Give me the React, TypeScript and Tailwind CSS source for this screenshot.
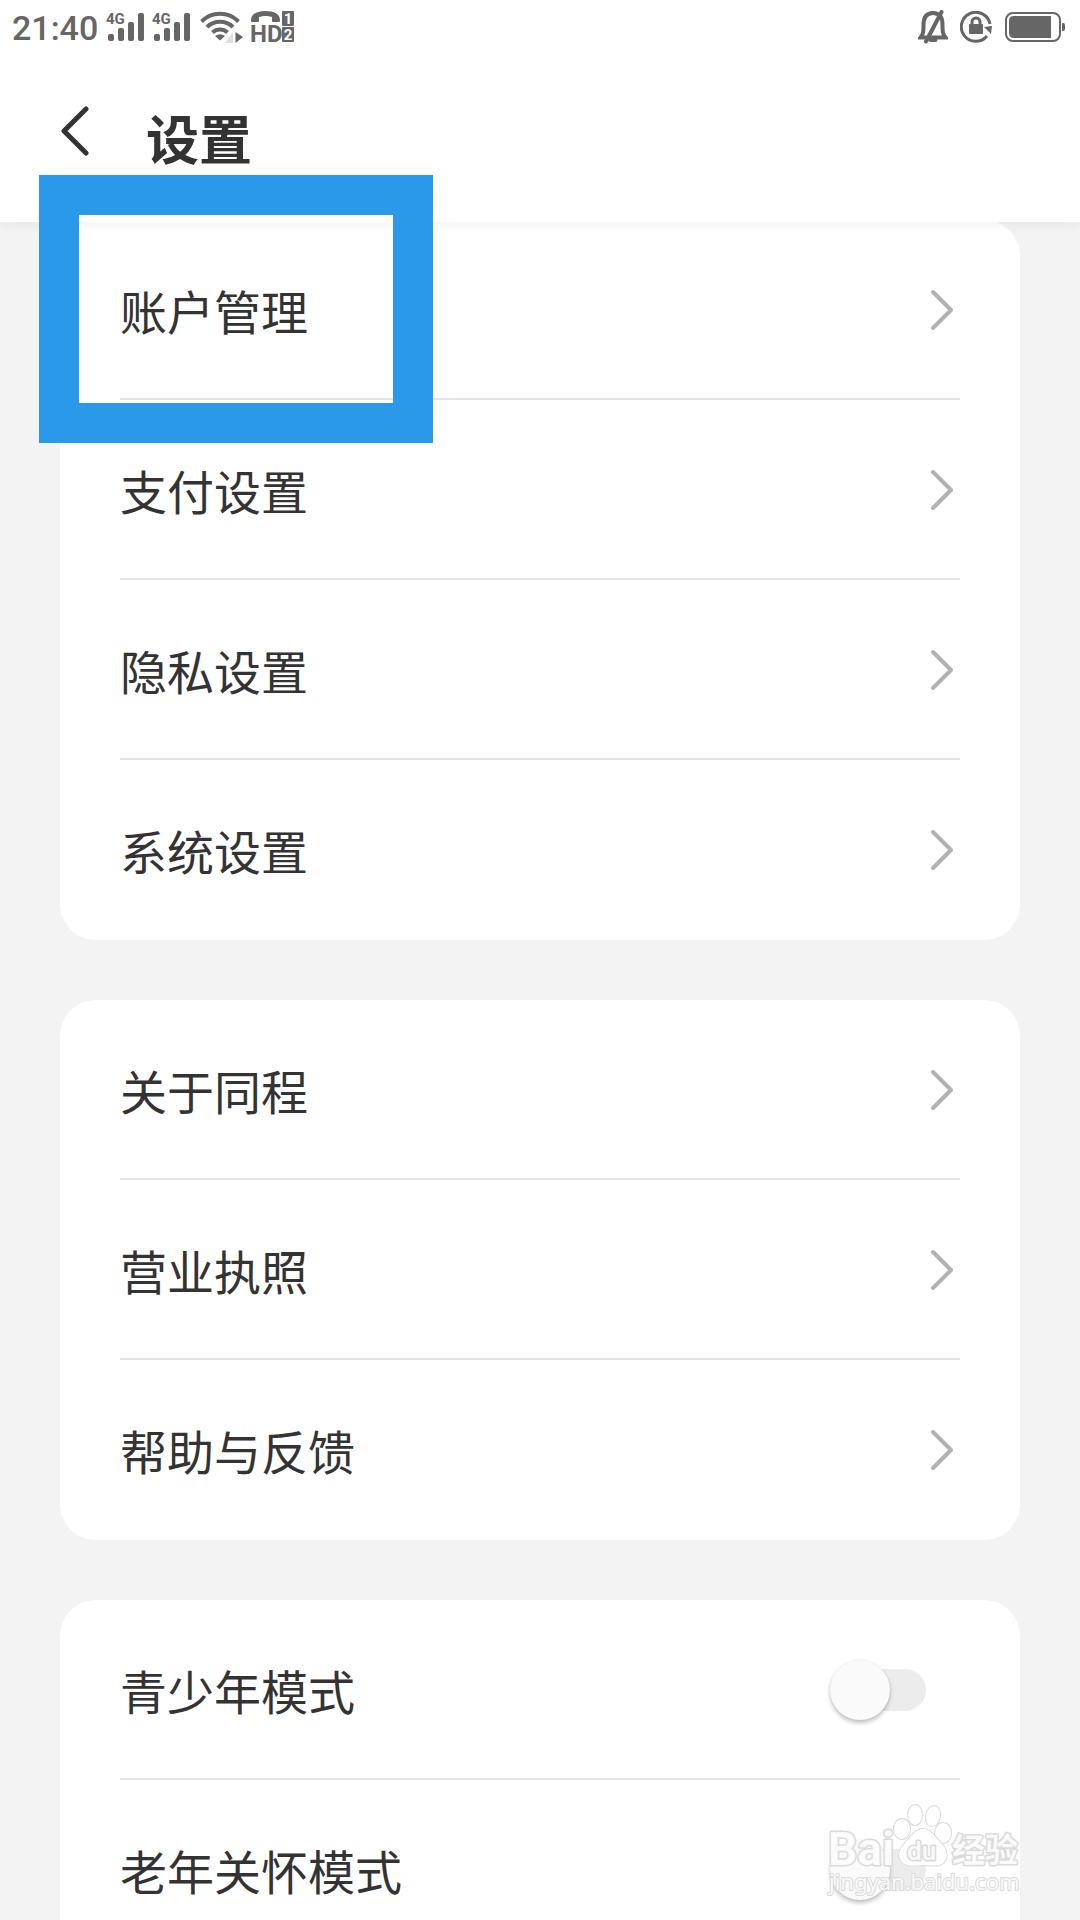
import React from "react";

type Row = { label: string; kind: "link" | "switch" };

const groups: Row[][] = [
  [
    { label: "账户管理", kind: "link" },
    { label: "支付设置", kind: "link" },
    { label: "隐私设置", kind: "link" },
    { label: "系统设置", kind: "link" },
  ],
  [
    { label: "关于同程", kind: "link" },
    { label: "营业执照", kind: "link" },
    { label: "帮助与反馈", kind: "link" },
  ],
  [
    { label: "青少年模式", kind: "switch" },
    { label: "老年关怀模式", kind: "switch" },
  ],
];

function Signal() {
  return (
    <svg width="40" height="32" viewBox="0 0 40 32" fill="#666" aria-hidden="true">
      <text x="0" y="13" fontFamily="Roboto, sans-serif" fontSize="15" fontWeight="700">
        4G
      </text>
      <rect x="2" y="23" width="6" height="7" rx="2" />
      <rect x="12" y="17" width="6" height="13" rx="2" />
      <rect x="22" y="11" width="6" height="19" rx="2" />
      <rect x="32" y="2" width="6" height="28" rx="2" />
    </svg>
  );
}

function Wifi() {
  return (
    <svg width="44" height="32" viewBox="0 0 44 32" aria-hidden="true">
      <g fill="none" stroke="#666" strokeWidth="4">
        <path d="M1.5 10.500 A26 26 0 0 1 38.5 10.500" />
        <path d="M7 16 A18.500 18.500 0 0 1 33 16" />
        <path d="M12.500 21.500 A11 11 0 0 1 27.500 21.500" />
      </g>
      <path d="M15 25 Q20 21.500 25 25 L20 29.500 Z" fill="#666" />
      <path d="M33 21 V32 H25 Z" fill="#ddd" />
      <path d="M35.500 21 L43 26 L35.500 32 Z" fill="#666" />
    </svg>
  );
}

function HdCall() {
  return (
    <svg className="overflow-visible" width="46" height="32" viewBox="0 0 46 32" fill="#666" aria-hidden="true">
      <path d="M1 9 C1 3 7 0 15.500 0 S30 3 30 9 V10 Q30 11 29 11 H23 Q22 11 22 10 V6 Q15.500 4 9 6 V10 Q9 11 8 11 H2 Q1 11 1 10 Z" />
      <text x="0" y="31" fontFamily="Roboto, sans-serif" fontSize="24" fontWeight="700">
        HD
      </text>
      <rect x="32" y="0" width="12" height="15" rx="1" />
      <rect x="32" y="16" width="12" height="15" rx="1" />
      <g fill="#fff" fontFamily="Roboto, sans-serif" fontSize="15" fontWeight="700" textAnchor="middle">
        <text x="38" y="13">1</text>
        <text x="38" y="29">2</text>
      </g>
    </svg>
  );
}

function BellOff() {
  return (
    <svg width="30" height="34" viewBox="0 0 30 34" fill="none" stroke="#666" aria-hidden="true">
      <path
        d="M2.500 27.500 H27.500 C24.500 24 24.500 21 24.500 15 C24.500 7 21 3 15 3 S5.500 7 5.500 15 C5.500 21 5.500 24 2.500 27.500 Z"
        strokeWidth="4"
      />
      <path d="M8 31.500 L23.500 2" strokeWidth="4" strokeLinecap="round" />
      <path d="M12.500 30 H17.500" strokeWidth="4" strokeLinecap="round" />
    </svg>
  );
}

function RotationLock() {
  return (
    <svg width="32" height="32" viewBox="0 0 32 32" aria-hidden="true">
      <path d="M27 25 A14.500 14.500 0 1 1 30 13" fill="none" stroke="#666" strokeWidth="3" />
      <path d="M24 16 L32 15 L31 23 Z" fill="#666" />
      <rect x="9" y="13" width="14" height="10" rx="1" fill="#666" />
      <path d="M12 14 V11 A4 4 0 0 1 20 11 V14" fill="none" stroke="#666" strokeWidth="3" />
    </svg>
  );
}

function Battery() {
  return (
    <svg width="60" height="30" viewBox="0 0 60 30" aria-hidden="true">
      <rect x="1" y="1" width="54" height="28" rx="7" fill="none" stroke="#666" strokeWidth="2" />
      <path d="M46 4 V26 H9 Q4 26 4 21 V9 Q4 4 9 4 Z" fill="#666" />
      <path d="M57 11 H58 Q60 11 60 13 V17 Q60 19 58 19 H57 Z" fill="#666" />
    </svg>
  );
}

function StatusBar() {
  return (
    <div className="flex h-[54px] items-center justify-between pl-3 pr-[15px] text-[#666]">
      <div className="flex items-center">
        <span className="w-[94px] pt-0.5 font-[Roboto,sans-serif] text-[34px] leading-[52px] font-medium">21:40</span>
        <Signal />
        <span className="w-1.5" />
        <Signal />
        <span className="w-2" />
        <Wifi />
        <span className="w-1.5" />
        <HdCall />
      </div>
      <div className="flex items-center">
        <BellOff />
        <span className="w-3" />
        <RotationLock />
        <span className="w-[13px]" />
        <Battery />
      </div>
    </div>
  );
}

function Chevron() {
  return (
    <svg
      className="mr-1.5"
      width="24"
      height="44"
      viewBox="0 0 24 44"
      fill="none"
      stroke="#b2b2b2"
      strokeWidth="4"
      strokeLinecap="round"
      strokeLinejoin="round"
      aria-hidden="true"
    >
      <path d="M3 4 L21 22 L3 40" />
    </svg>
  );
}

function SettingRow({ row }: { row: Row }) {
  const box = "flex h-[180px] w-full items-center justify-between text-left text-[47px] leading-[68px] text-[#333]";
  if (row.kind === "link") {
    return (
      <button type="button" className={box}>
        <span className="pt-2">{row.label}</span>
        <Chevron />
      </button>
    );
  }
  return (
    <label className={box}>
      <span className="pt-2">{row.label}</span>
      <input
        type="checkbox"
        role="switch"
        className="relative mr-[34px] h-[60px] w-24 appearance-none before:absolute before:top-[9px] before:right-0 before:h-[42px] before:w-[84px] before:rounded-full before:bg-[#ececec] after:absolute after:top-0 after:left-0 after:size-[60px] after:rounded-full after:bg-[#fafafa] after:shadow-[0_3px_4px_rgba(0,0,0,0.24),0_0_2px_rgba(0,0,0,0.08)]"
      />
    </label>
  );
}

function Watermark() {
  return (
    <svg
      className="pointer-events-none absolute right-[54px] bottom-3 z-20"
      width="202"
      height="110"
      viewBox="824 1798 202 110"
      fill="#fff"
      fillOpacity="0.85"
      stroke="#dadada"
      strokeWidth="3"
      strokeLinejoin="round"
      paintOrder="stroke"
      aria-label="Baidu 经验"
    >
      <text x="828" y="1865" fontFamily="Roboto, sans-serif" fontSize="46" fontWeight="700">
        Bai
      </text>
      <g strokeWidth="2" fillOpacity="1">
        <ellipse cx="902" cy="1829" rx="8" ry="10" />
        <ellipse cx="915" cy="1815" rx="7" ry="10" />
        <ellipse cx="933" cy="1816" rx="7" ry="10" transform="rotate(12 933 1816)" />
        <ellipse cx="943" cy="1833" rx="8" ry="10" />
        <path d="M923 1829 C931 1829 934 1836 940 1842 C946 1848 948 1853 946 1859 C943 1867 935 1866 923 1865 C911 1866 903 1867 900 1859 C898 1853 900 1848 906 1842 C912 1836 915 1829 923 1829 Z" />
      </g>
      <text x="907" y="1860" fontFamily="Roboto, sans-serif" fontSize="26" fontWeight="500">
        du
      </text>
      <text x="952" y="1862" fontFamily="'Noto Sans CJK SC', sans-serif" fontSize="33" fontWeight="700">
        经验
      </text>
      <text x="829" y="1890" strokeWidth="2" fontFamily="'Noto Sans', sans-serif" fontSize="22" fontWeight="400">
        jingyan.baidu.com
      </text>
    </svg>
  );
}

export default function App() {
  return (
    <div
      lang="zh-CN"
      className="relative h-screen overflow-hidden bg-[#f3f3f3] font-['Roboto','Noto_Sans_CJK_SC',sans-serif]"
    >
      <header className="relative z-10 h-[222px] bg-white shadow-[0_2px_12px_rgba(0,0,0,0.06)]">
        <StatusBar />
        <div className="flex items-center pt-[50px] pl-[60px]">
          <button type="button" aria-label="返回" className="mb-6 w-[86px]">
            <svg
              width="30"
              height="52"
              viewBox="0 0 30 52"
              fill="none"
              stroke="#333"
              strokeWidth="5"
              strokeLinecap="round"
              strokeLinejoin="round"
              aria-hidden="true"
            >
              <path d="M26 5 L4 27 L26 49" />
            </svg>
          </button>
          <h1 className="text-[53px] leading-[76px] font-bold text-[#333]">设置</h1>
        </div>
      </header>

      <main className="-mt-0.5 flex flex-col gap-[60px] px-[60px]">
        {groups.map((rows, g) => (
          <ul key={g} className="rounded-[36px] bg-white px-[60px]">
            {rows.map((row, i) => (
              <li key={row.label} className="relative">
                <SettingRow row={row} />
                {i < rows.length - 1 && <div className="absolute inset-x-0 bottom-0 h-0.5 bg-[#e4e4e4]" />}
              </li>
            ))}
          </ul>
        ))}
      </main>

      <div className="pointer-events-none absolute top-[175px] left-[39px] z-20 h-[268px] w-[394px] border-[40px] border-[#2a99ea]" />
      <Watermark />
    </div>
  );
}
